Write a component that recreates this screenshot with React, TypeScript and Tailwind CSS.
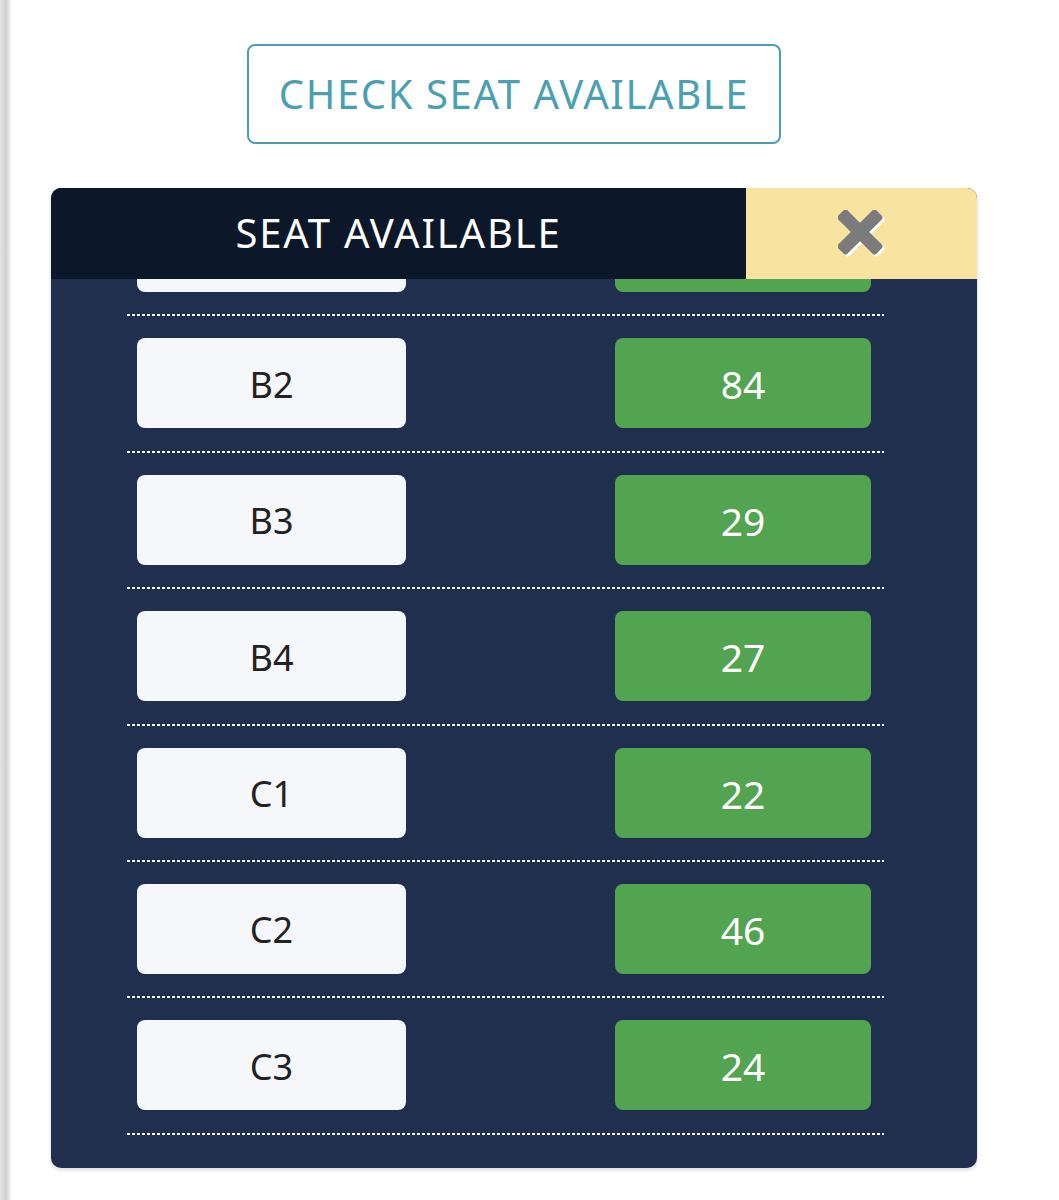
const rows = [
  { seat: "", count: null },
  { seat: "B2", count: 84 },
  { seat: "B3", count: 29 },
  { seat: "B4", count: 27 },
  { seat: "C1", count: 22 },
  { seat: "C2", count: 46 },
  { seat: "C3", count: 24 },
]

function CloseIcon() {
  return (
    <svg width="48" height="48" viewBox="0 0 48 48" className="block">
      <g transform="translate(2 2)" fill="#ffffff">
        <rect x="-5" y="15.5" width="54" height="13" rx="3" transform="rotate(45 22 22)" />
        <rect x="-5" y="15.5" width="54" height="13" rx="3" transform="rotate(-45 22 22)" />
      </g>
      <g fill="#7b7b7b">
        <rect x="-5" y="15.5" width="54" height="13" rx="3" transform="rotate(45 22 22)" />
        <rect x="-5" y="15.5" width="54" height="13" rx="3" transform="rotate(-45 22 22)" />
      </g>
    </svg>
  )
}

export default function App() {
  return (
    <div className="flex min-h-[1200px] bg-white font-['Noto_Sans',sans-serif]">
      {/* page edge */}
      <div className="w-[12px] shrink-0 bg-gradient-to-r from-[#e4e4e4] via-[#cfcfcf] to-white" />

      <div className="ml-[39px] flex w-[926px] flex-col items-center pt-[44px]">
        <button className="flex h-[100px] w-[534px] items-center justify-center rounded-[8px] border-2 border-[#4c9fb3] bg-white pb-[1px] text-[40px] leading-none tracking-[1.6px] text-[#4a9fb2]">
          CHECK SEAT AVAILABLE
        </button>

        {/* Seat panel */}
        <div className="mt-[44px] flex h-[980px] w-full flex-col overflow-hidden rounded-[10px] bg-[#1f2f4d] shadow-[0_2px_4px_rgba(0,0,0,0.15)]">
          <div className="flex h-[91px] shrink-0">
            <div className="flex flex-1 items-center justify-center bg-[#0c1829] pb-[1px] text-[40px] leading-none tracking-[1.8px] text-white">
              SEAT AVAILABLE
            </div>
            <div className="flex w-[231px] items-center justify-center bg-[#f9e3a0]">
              <CloseIcon />
            </div>
          </div>

          <div className="flex-1 overflow-hidden">
            <div className="-mt-[99px] ml-[76px] w-[757px]">
              {rows.map((row, i) => (
                <div key={i}>
                  <div className="flex items-center justify-between pb-[22.4px] pl-[10px] pr-[13px] pt-[22px]">
                    <div className="flex h-[90px] w-[269px] items-center justify-center rounded-[8px] bg-[#f5f7fa] pt-[3px] text-[36px] leading-none text-[#222]">
                      {row.seat}
                    </div>
                    <div className="flex h-[90px] w-[256px] items-center justify-center rounded-[8px] bg-[#52a450] pt-[1px] text-[39px] leading-none text-white">
                      {row.count}
                    </div>
                  </div>
                  <div className="h-[2px] bg-[repeating-linear-gradient(90deg,#ffffff_0_3px,transparent_3px_5px)]" />
                </div>
              ))}
            </div>
          </div>
        </div>
      </div>
    </div>
  )
}
